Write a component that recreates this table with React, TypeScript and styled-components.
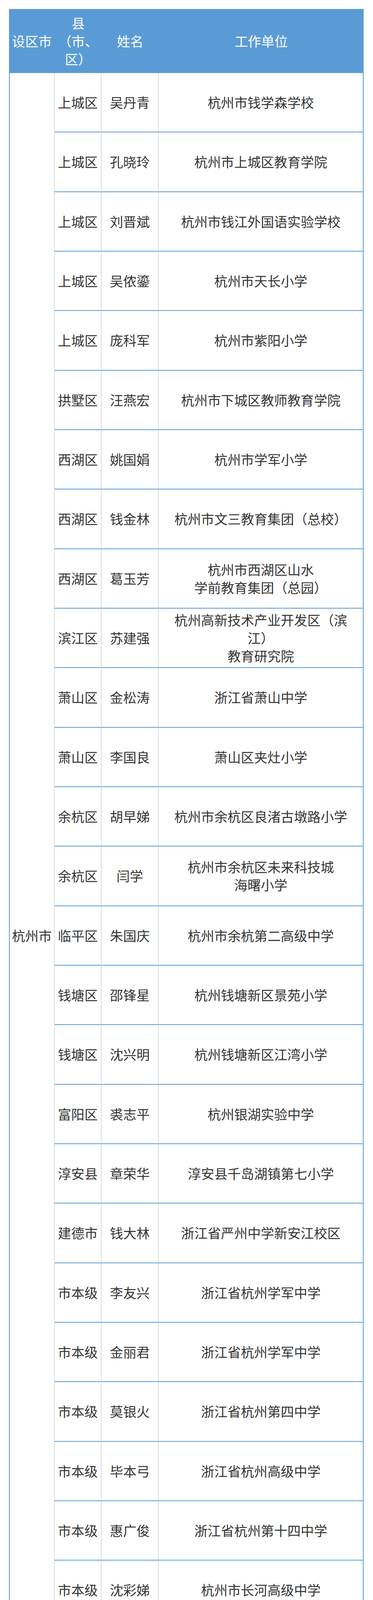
import React from "react";
import styled, { createGlobalStyle } from "styled-components";

const GlobalStyle = createGlobalStyle`
  html, body {
    margin: 0;
    padding: 0;
    background: #ffffff;
  }
  body {
    font-family: "Noto Sans CJK SC", "Noto Sans", sans-serif;
    color: #333333;
  }
  * {
    box-sizing: border-box;
  }
`;

const BLUE = "#5b9bd5";
const GRAY = "#d6dae3";

const Page = styled.div`
  padding: 23px 24px 0 23px;
`;

const Grid = styled.div`
  width: 907px;
  display: grid;
  grid-template-columns: 117px 120px 146px 524px;
  grid-template-rows: 164px repeat(29, 152.34px);
  font-size: 34px;
  line-height: 46px;
`;

const HeadCell = styled.div`
  display: flex;
  align-items: center;
  justify-content: center;
  padding: 0 4px;
  background: ${BLUE};
  color: #ffffff;
  text-align: center;
`;

const Cell = styled.div<{ $last?: boolean; $wide?: boolean }>`
  display: flex;
  align-items: center;
  justify-content: center;
  padding: ${({ $wide }) => ($wide ? "0 20px" : "0 4px")};
  text-align: center;
  white-space: pre-line;
  border-bottom: 2px solid ${BLUE};
  border-right: 2px solid ${({ $last }) => ($last ? BLUE : GRAY)};
`;

const CityCell = styled(Cell)`
  grid-column: 1;
  grid-row: 2 / span 29;
  border-left: 2px solid ${BLUE};
`;

const rows = [
  ["上城区", "吴丹青", "杭州市钱学森学校"],
  ["上城区", "孔晓玲", "杭州市上城区教育学院"],
  ["上城区", "刘晋斌", "杭州市钱江外国语实验学校"],
  ["上城区", "吴侬鎏", "杭州市天长小学"],
  ["上城区", "庞科军", "杭州市紫阳小学"],
  ["拱墅区", "汪燕宏", "杭州市下城区教师教育学院"],
  ["西湖区", "姚国娟", "杭州市学军小学"],
  ["西湖区", "钱金林", "杭州市文三教育集团（总校）"],
  ["西湖区", "葛玉芳", "杭州市西湖区山水\n学前教育集团（总园）"],
  ["滨江区", "苏建强", "杭州高新技术产业开发区（滨江）\n教育研究院"],
  ["萧山区", "金松涛", "浙江省萧山中学"],
  ["萧山区", "李国良", "萧山区夹灶小学"],
  ["余杭区", "胡早娣", "杭州市余杭区良渚古墩路小学"],
  ["余杭区", "闫学", "杭州市余杭区未来科技城\n海曙小学"],
  ["临平区", "朱国庆", "杭州市余杭第二高级中学"],
  ["钱塘区", "邵锋星", "杭州钱塘新区景苑小学"],
  ["钱塘区", "沈兴明", "杭州钱塘新区江湾小学"],
  ["富阳区", "裘志平", "杭州银湖实验中学"],
  ["淳安县", "章荣华", "淳安县千岛湖镇第七小学"],
  ["建德市", "钱大林", "浙江省严州中学新安江校区"],
  ["市本级", "李友兴", "浙江省杭州学军中学"],
  ["市本级", "金丽君", "浙江省杭州学军中学"],
  ["市本级", "莫银火", "浙江省杭州第四中学"],
  ["市本级", "毕本弓", "浙江省杭州高级中学"],
  ["市本级", "惠广俊", "浙江省杭州第十四中学"],
  ["市本级", "沈彩娣", "杭州市长河高级中学"],
  ["市本级", "斯理炯", "浙江省杭州第二中学"],
  ["市本级", "俞昕", "浙江省杭州高级中学"],
  ["市本级", "杨志敏", "杭州市基础教育研究室"],
];

export default function App() {
  return (
    <>
      <GlobalStyle />
      <Page>
        <Grid>
          <HeadCell>设区市</HeadCell>
          <HeadCell>县（市、区）</HeadCell>
          <HeadCell>姓名</HeadCell>
          <HeadCell>工作单位</HeadCell>
          <CityCell>杭州市</CityCell>
          {rows.map(([district, name, unit], i) => (
            <React.Fragment key={i}>
              <Cell>{district}</Cell>
              <Cell>{name}</Cell>
              <Cell $last $wide>
                {unit}
              </Cell>
            </React.Fragment>
          ))}
        </Grid>
      </Page>
    </>
  );
}
